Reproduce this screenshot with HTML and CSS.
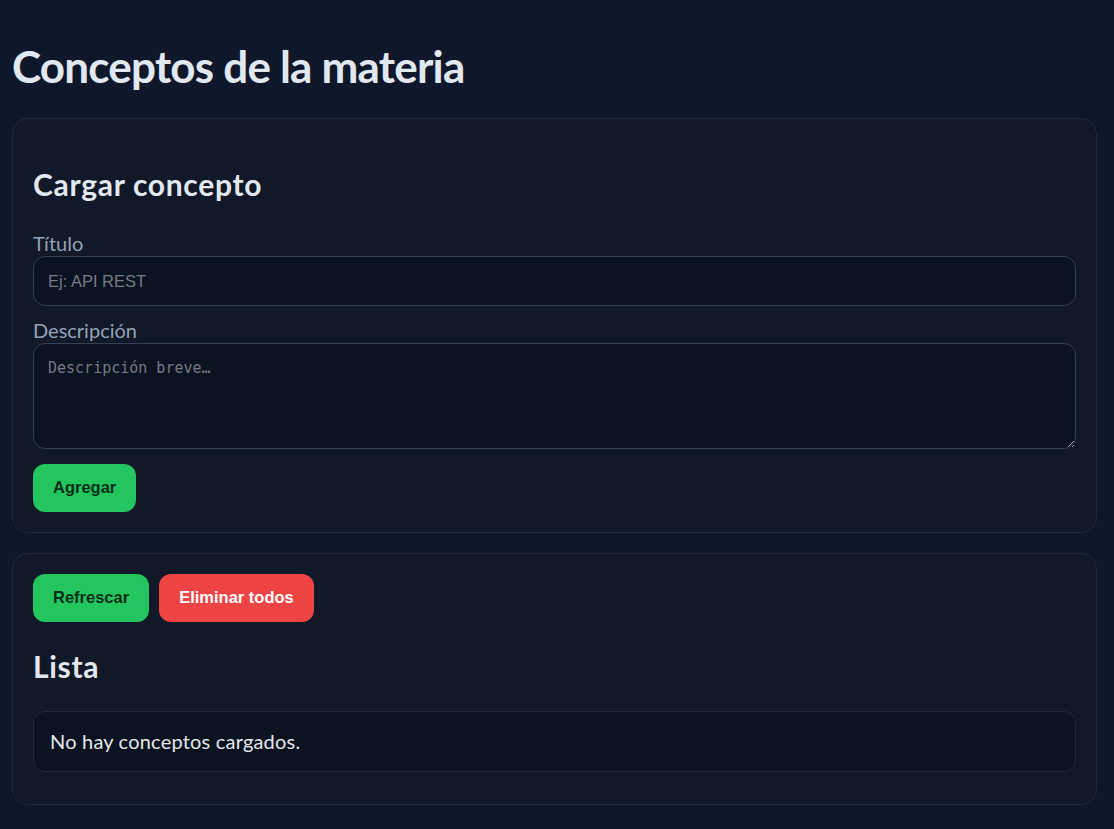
FILE: index.html
```html
<!DOCTYPE html>
<html lang="es">
<head>
<meta charset="utf-8">
<title>Conceptos de la materia</title>
<link rel="stylesheet" href="styles.css">
</head>
<body>
<main class="page">
  <h1 class="page-title">Conceptos de la materia</h1>

  <section class="card">
    <h2 class="card-title">Cargar concepto</h2>
    <form class="form">
      <label class="label" for="titulo">Título</label>
      <input class="input" id="titulo" type="text" placeholder="Ej: API REST">
      <label class="label" for="desc">Descripción</label>
      <textarea class="textarea" id="desc" placeholder="Descripción breve…"></textarea>
      <div class="form-actions">
        <button type="button" class="btn btn-green">Agregar</button>
      </div>
    </form>
  </section>

  <section class="card">
    <div class="toolbar">
      <button type="button" class="btn btn-green">Refrescar</button>
      <button type="button" class="btn btn-red">Eliminar todos</button>
    </div>
    <h2 class="card-title list-title">Lista</h2>
    <ul class="list">
      <li class="list-item">No hay conceptos cargados.</li>
    </ul>
  </section>
</main>
</body>
</html>
```
FILE: styles.css
```css
* { box-sizing: border-box; }

html, body {
  margin: 0;
  padding: 0;
}

body {
  background: #0f172a;
  color: #e2e8f0;
  font-family: Lato, "Noto Sans", sans-serif;
  min-height: 829px;
  color-scheme: dark;
}

.page {
  width: 1085px;
  margin-left: 12px;
  display: flex;
  flex-direction: column;
  gap: 20px;
  padding-bottom: 24px;
}

.page-title {
  margin: 36px 0 2px;
  font-size: 44px;
  line-height: 60px;
  font-weight: 700;
  letter-spacing: -0.8px;
  color: #e2e8f0;
}

.card {
  background: #111827;
  border: 1px solid #1f2937;
  border-radius: 16px;
  padding: 20px;
}

.card-title {
  margin: 25px 0 26px;
  font-size: 30px;
  line-height: 40px;
  font-weight: 700;
  letter-spacing: 0.7px;
  color: #e2e8f0;
}

.form {
  display: flex;
  flex-direction: column;
}

.label {
  display: block;
  font-size: 20px;
  line-height: 26px;
  color: #94a3b8;
}

.input,
.textarea {
  display: block;
  width: 100%;
  background: #0b1220;
  border: 1px solid #334155;
  border-radius: 12px;
  color: #e5e7eb;
  outline: none;
}

.input {
  height: 50px;
  padding: 0 14px;
  margin-bottom: 11px;
  font-family: "Liberation Sans", Arial, sans-serif;
  font-size: 16.5px;
}

.textarea {
  height: 106px;
  padding: 14px;
  font-family: "DejaVu Sans Mono", "Liberation Mono", monospace;
  font-size: 15px;
  line-height: 20px;
  resize: both;
}

.input::placeholder,
.textarea::placeholder {
  color: #777b84;
}

.form-actions {
  margin-top: 15px;
  display: flex;
}

.btn {
  height: 48px;
  padding: 0 20px 1px;
  border: none;
  border-radius: 12px;
  font-family: "Liberation Sans", Arial, sans-serif;
  font-size: 16.5px;
  font-weight: 700;
  cursor: pointer;
}

.btn-green {
  background: #22c55e;
  color: #052e16;
}

.btn-red {
  background: #ef4444;
  color: #ffffff;
}

.toolbar {
  display: flex;
  gap: 10px;
}

.list-title {
  margin: 24px 0 25px;
}

.list {
  list-style: none;
  margin: 0 0 12px;
  padding: 0;
}

.list-item {
  background: #0b1220;
  border: 1px solid #1f2937;
  border-radius: 12px;
  padding: 15px 16px 16px;
  font-size: 20px;
  line-height: 28px;
  letter-spacing: 0.2px;
  color: #e5e7eb;
}
```
